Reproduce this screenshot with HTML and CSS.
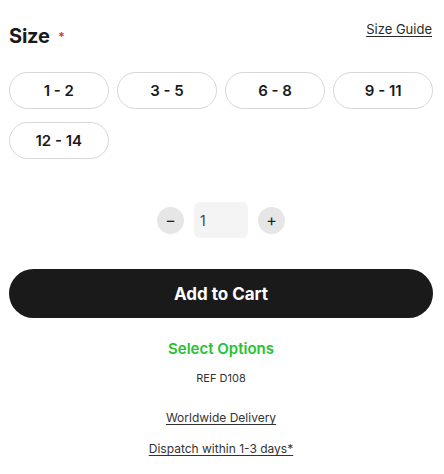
FILE: index.html
```html
<!DOCTYPE html>
<html>
<head>
<meta charset="utf-8">
<link rel="stylesheet" href="styles.css">
</head>
<body>
<div class="product">
  <div class="size-header">
    <div class="size-title">Size <span class="req">*</span></div>
    <a class="size-guide" href="#">Size Guide</a>
  </div>
  <div class="sizes">
    <button class="size-btn">1 - 2</button>
    <button class="size-btn">3 - 5</button>
    <button class="size-btn">6 - 8</button>
    <button class="size-btn">9 - 11</button>
    <button class="size-btn">12 - 14</button>
  </div>
  <div class="qty">
    <button class="qty-btn">&minus;</button>
    <div class="qty-input">1</div>
    <button class="qty-btn">+</button>
  </div>
  <button class="add-cart">Add to Cart</button>
  <div class="select-opts">Select Options</div>
  <div class="ref">REF D108</div>
  <a class="info-link first" href="#">Worldwide Delivery</a>
  <a class="info-link second" href="#">Dispatch within 1-3 days*</a>
</div>
</body>
</html>
```

FILE: styles.css
```css
* { box-sizing: border-box; }
html, body { margin: 0; padding: 0; background: #fff; }
body { font-family: Inter, "Noto Sans", sans-serif; color: #1a1a1a; }
.product { padding: 20px 11px 0 9px; display: flex; flex-direction: column; }
.size-header { display: flex; justify-content: space-between; align-items: flex-start; }
.size-title { font-size: 20px; line-height: 24px; font-weight: 700; margin-top: 4px; letter-spacing: -0.2px; }
.req { color: #e0303a; font-size: 12px; font-weight: 600; vertical-align: 2px; margin-left: 4px; }
.size-guide { font-size: 13px; line-height: 16px; color: #2a2a2a; text-decoration: underline; text-underline-offset: 2px; margin-right: 1px; margin-top: 1px; }
.sizes { display: grid; grid-template-columns: repeat(4, 1fr); column-gap: 8.6px; row-gap: 13px; margin-top: 23px; }
.size-btn { height: 37px; border: 1px solid #d6d6d6; border-radius: 19px; background: #fff; font-family: inherit; font-size: 15px; font-weight: 600; color: #1a1a1a; padding: 0; }
.qty { display: flex; justify-content: center; align-items: center; margin-top: 43px; height: 36px; }
.qty-btn { width: 27px; height: 27px; border-radius: 50%; border: none; background: #e6e6e6; font-family: inherit; font-size: 16px; color: #222; padding: 0; display: flex; align-items: center; justify-content: center; }
.qty-input { width: 54px; height: 36px; background: #f4f4f4; border-radius: 6px; margin: 0 10px; font-size: 14px; color: #444; display: flex; align-items: center; padding-left: 6px; }
.add-cart { margin-top: 31px; height: 49px; border: none; border-radius: 25px; background: #1a1a1a; color: #fff; font-family: inherit; font-size: 17px; font-weight: 700; width: 100%; }
.select-opts { text-align: center; color: #26c230; font-size: 15px; font-weight: 600; line-height: 20px; margin-top: 21px; }
.ref { text-align: center; font-size: 11px; line-height: 14px; color: #333; margin-top: 12px; }
.info-link { align-self: center; font-size: 12px; line-height: 16px; color: #333; text-decoration: underline; text-underline-offset: 2px; }
.info-link.first { margin-top: 25px; }
.info-link.second { margin-top: 15px; }
```
